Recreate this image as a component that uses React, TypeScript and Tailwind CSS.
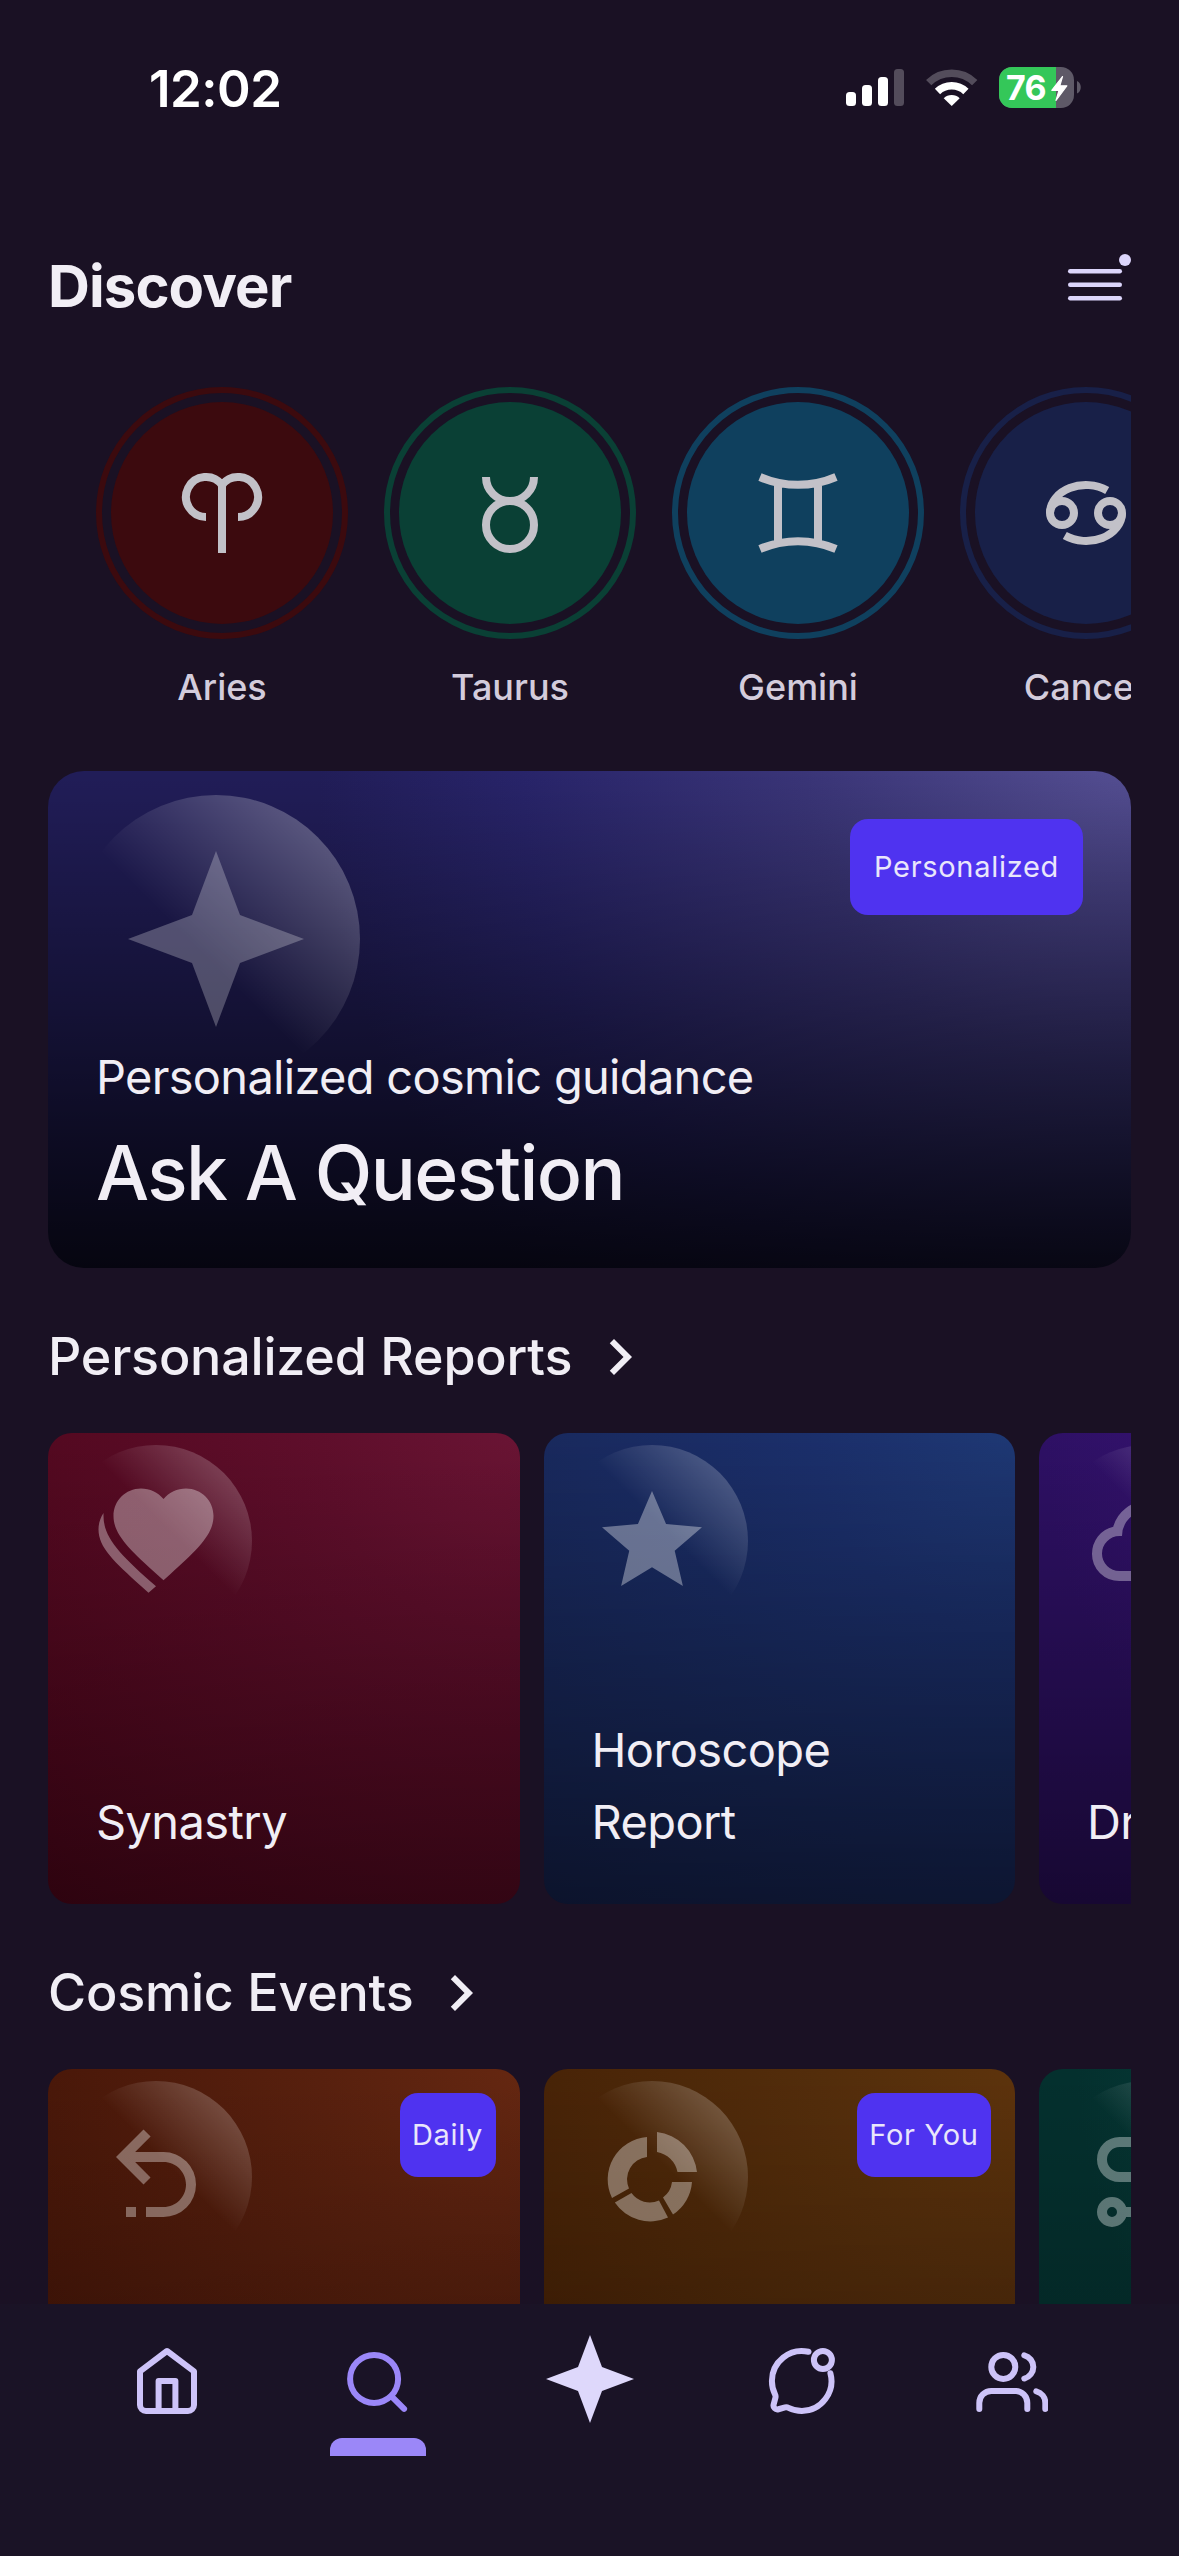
import type { ReactNode } from "react";

import { twMerge } from "tailwind-merge";

type TSign = {
  name: string;
  ring: string;
  fill: string;
  icon: ReactNode;
};

type TCard = {
  title: string;
  bg: string;
  badge?: string;
  icon: ReactNode;
};

const signs: TSign[] = [
  {
    name: "Aries",
    ring: "border-[#3c0a0e]",
    fill: "bg-[#3c0a0e]",
    icon: <path d="M12 22V5M12 5a5 5 0 1 0-4 8M16 13a5 5 0 1 0-4-8" />,
  },
  {
    name: "Taurus",
    ring: "border-[#0a4035]",
    fill: "bg-[#0a4035]",
    icon: (
      <>
        <circle cx="12" cy="15" r="6" />
        <path d="M6 3a6 6 0 0 0 12 0" />
      </>
    ),
  },
  {
    name: "Gemini",
    ring: "border-[#0f405e]",
    fill: "bg-[#0f405e]",
    icon: <path d="M2.5 3a24 24 0 0 0 19 0M2.5 21a24 24 0 0 1 19 0M7 4.5v15M17 4.5v15" />,
  },
  {
    name: "Cancer",
    ring: "border-[#182048]",
    fill: "bg-[#182048]",
    icon: (
      <>
        <circle cx="6" cy="12" r="3" />
        <circle cx="18" cy="12" r="3" />
        <path d="M3 12a9 7 0 0 1 14.3-5.65M21 12a9 7 0 0 1-14.3 5.65" />
      </>
    ),
  },
];

const reports: TCard[] = [
  {
    title: "Synastry",
    bg: "bg-[linear-gradient(to_top,rgba(0,0,0,0.4),transparent),radial-gradient(circle_at_100%_0%,#6a1434,#5f0e2b_30%,#4c0519_100%)]",
    icon: (
      <>
        <path d="M13.5 19.85l-1.45-1.32C6.9 13.86 3.5 10.78 3.5 7 3.5 3.92 5.92 1.5 9 1.5c1.74 0 3.41.81 4.5 2.09C14.59 2.31 16.26 1.5 18 1.5c3.08 0 5.5 2.42 5.5 5.5 0 3.78-3.4 6.86-8.55 11.54z" />
        <path d="M12 21.05l-1.5 1.3-1.45-1.32C3.6 16.1.5 13.3.5 9.7c0-1.25.36-2.35 1-3.3V7c0 4.3 3.3 7.8 10.5 14.05z" />
      </>
    ),
  },
  {
    title: "Horoscope Report",
    bg: "bg-[linear-gradient(to_top,rgba(0,0,0,0.48),transparent),radial-gradient(circle_at_100%_0%,#1e3874,#1b2f6b_30%,#172554_100%)]",
    icon: (
      <path d="M12 17.27L18.18 21l-1.64-7.03L22 9.24l-7.19-.62L12 2 9.19 8.62 2 9.24l5.45 4.73L5.82 21z" />
    ),
  },
  {
    title: "Dreams",
    bg: "bg-[linear-gradient(to_top,rgba(0,0,0,0.5),transparent),radial-gradient(circle_at_100%_0%,#4c1d95,#3b1478_20%,#2e1065_70%)]",
    icon: (
      <path d="M6.5 20Q4.22 20 2.61 18.43 1 16.85 1 14.58 1 12.63 2.17 11.1 3.35 9.57 5.25 9.15 5.88 6.85 7.75 5.43 9.63 4 12 4 14.93 4 16.96 6.04 19 8.07 19 11 20.73 11.2 21.86 12.5 23 13.78 23 15.5 23 17.38 21.69 18.69 20.38 20 18.5 20M6.5 18H18.5Q19.55 18 20.27 17.27 21 16.55 21 15.5 21 14.45 20.27 13.73 19.55 13 18.5 13H17V11Q17 8.93 15.54 7.46 14.08 6 12 6 9.93 6 8.46 7.46 7 8.93 7 11H6.5Q5.05 11 4.03 12.03 3 13.05 3 14.5 3 15.95 4.03 17 5.05 18 6.5 18Z" />
    ),
  },
];

const events: TCard[] = [
  {
    title: "",
    badge: "Daily",
    bg: "bg-[linear-gradient(to_top,rgba(0,0,0,0.3),transparent),radial-gradient(circle_at_100%_0%,#652711,#58200e_30%,#431407_90%)]",
    icon: (
      <path d="M13.5 7A6.5 6.5 0 0 1 20 13.5 6.5 6.5 0 0 1 13.5 20H10V18H13.5C16 18 18 16 18 13.5S16 9 13.5 9H7.83L10.91 12.09 9.5 13.5 4 8 9.5 2.5 10.92 3.91 7.83 7H13.5M6 18H8V20H6V18Z" />
    ),
  },
  {
    title: "",
    badge: "For You",
    bg: "bg-[linear-gradient(to_top,rgba(0,0,0,0.28),transparent),radial-gradient(circle_at_100%_0%,#5d330c,#532d0b_30%,#431f05_90%)]",
    icon: (
      <>
        <path d="M13 3a9.05 9.05 0 0 1 8 8h-3.9A5.1 5.1 0 0 0 13 7z" />
        <path d="M11 4v4a4.5 4.5 0 0 0-3.6 6.3L4 16.2A8.5 8.5 0 0 1 11 4z" />
        <path d="M7.9 15.2a4.5 4.5 0 0 0 5.5 1.5l1.8 3.4a8.5 8.5 0 0 1-10.63-3z" />
        <path d="M16 13h4a8.5 8.5 0 0 1-3.8 6.5l-2-3.4A4.5 4.5 0 0 0 16 13z" />
      </>
    ),
  },
  {
    title: "",
    bg: "bg-[linear-gradient(to_top,rgba(0,0,0,0.3),transparent),radial-gradient(circle_at_100%_0%,#115e59,#084540_20%,#04302e_65%)]",
    icon: (
      <path
        fill="none"
        stroke="currentColor"
        strokeWidth="2"
        d="M18 5H6.5A3.5 3.5 0 0 0 3 8.5A3.5 3.5 0 0 0 6.5 12H18M7 19a2 2 0 1 0-4 0 2 2 0 0 0 4 0h11"
      />
    ),
  },
];

const StarFour = ({ className }: { className: string }) => (
  <svg viewBox="0 0 24 24" fill="currentColor" className={className}>
    <path d="M12 1L9 9 1 12l8 3 3 8 3-8 8-3-8-3z" />
  </svg>
);

const StatusBar = () => (
  <div className="h-[177px] shrink-0 flex items-start justify-between pl-[149px] pr-[96px] pt-[58px] text-white">
    <span className="text-[51px] leading-[62px] font-semibold tracking-[-0.5px]">12:02</span>
    <svg width="238" height="60" viewBox="0 0 238 60" fill="white">
      {/* signal */}
      <rect x="1" y="34" width="10" height="14" rx="3.5" />
      <rect x="17" y="27" width="10" height="21" rx="3.5" />
      <rect x="33" y="19" width="10" height="29" rx="3.5" />
      <rect x="49" y="11" width="10" height="37" rx="3.5" opacity="0.25" />
      {/* wifi */}
      <g fill="none" stroke="white" strokeWidth="7.6">
        <path d="M83.7 24.6a33 33 0 0 1 46 0" opacity="0.25" />
        <path d="M92.5 33.4a20.5 20.5 0 0 1 28.4 0" />
      </g>
      <path d="M106.7 48l-8-7.800a11.600 11.600 0 0 1 16 0z" />
      {/* battery */}
      <clipPath id="battery">
        <rect x="154" y="9" width="75" height="41" rx="13" />
      </clipPath>
      <g clipPath="url(#battery)">
        <rect x="154" y="9" width="75" height="41" fill="#5e5967" />
        <rect x="154" y="9" width="57" height="41" fill="#34c759" />
      </g>
      <path d="M232 23c5 2 5 10.500 0 12.500z" fill="#5e5967" />
      <text x="161" y="42" fontSize="34" fontWeight="700" letterSpacing="-0.7">
        76
      </text>
      <path
        d="M217.500 18.500L206.800 32.300H214L211 42.500 221.800 27.800H214.800z"
        stroke="white"
        strokeWidth="1.2"
        strokeLinejoin="round"
      />
    </svg>
  </div>
);

const Moon = ({ className, children }: { className: string; children: ReactNode }) => (
  <div
    className={twMerge("absolute rounded-full flex items-center justify-center", className)}
  >
    {children}
  </div>
);

const Badge = ({ className, children }: { className: string; children: ReactNode }) => (
  <span
    className={twMerge(
      "absolute flex items-center justify-center bg-[#4f33f0] text-[#e9e6fb] text-[29px] tracking-[0.7px] rounded-[18px] whitespace-nowrap",
      className
    )}
  >
    {children}
  </span>
);

const SectionTitle = ({ children }: { children: string }) => (
  <div className="mt-[53px] mb-10 h-[72px] flex items-center gap-3">
    <h2 className="text-[52px] font-medium tracking-[-0.2px] whitespace-nowrap">{children}</h2>
    <svg width="72" height="72" viewBox="0 0 24 24" fill="currentColor">
      <path d="M8.59 16.58L13.17 12 8.59 7.41 10 6l6 6-6 6z" />
    </svg>
  </div>
);

const CardRow = ({ cards }: { cards: TCard[] }) => (
  <div className="flex gap-6 overflow-hidden shrink-0">
    {cards.map((card, i) => (
      <div
        key={i}
        className={twMerge(
          "relative w-[471.5px] h-[471px] shrink-0 rounded-3xl px-12 pb-[46px] flex items-end",
          card.bg
        )}
      >
        <Moon className="left-3 top-3 size-[192px] bg-[linear-gradient(to_top_right,transparent_56%,rgba(255,255,255,0.3))]">
          <svg width="120" height="120" viewBox="0 0 24 24" fill="currentColor" className="text-white/35">
            {card.icon}
          </svg>
        </Moon>
        {card.badge && (
          <Badge
            className={twMerge(
              "right-6 top-6 h-[84px]",
              card.badge === "Daily" ? "w-24" : "w-[134px]"
            )}
          >
            {card.badge}
          </Badge>
        )}
        <p className="text-[47px] leading-[72px] tracking-[-0.6px] w-[300px]">{card.title}</p>
      </div>
    ))}
  </div>
);

const NavIcon = ({ children }: { children: ReactNode }) => (
  <svg
    width="72"
    height="72"
    viewBox="0 0 24 24"
    fill="none"
    stroke="currentColor"
    strokeWidth="2"
    strokeLinecap="round"
    strokeLinejoin="round"
  >
    {children}
  </svg>
);

const NavItem = ({ active, children }: { active?: boolean; children: ReactNode }) => (
  <button
    className={twMerge(
      "flex-1 flex flex-col items-center text-[#cdc3f8]",
      active && "text-[#9b87f8]"
    )}
  >
    <span className="h-[134px] pt-5 flex items-center">{children}</span>
    {active && <span className="w-24 h-[18px] rounded-t-xl bg-[#9b87f8]" />}
  </button>
);

const BottomNav = () => (
  <nav className="h-[252px] shrink-0 flex items-start px-[61px] bg-[#1a1326]">
    <NavItem>
      <NavIcon>
        <path d="M3 8.8L12 2l9 6.8V20a2 2 0 0 1-2 2H5a2 2 0 0 1-2-2z" />
        <path d="M9.2 22V12h5.6v10" />
      </NavIcon>
    </NavItem>
    <NavItem active>
      <NavIcon>
        <circle cx="10.7" cy="11.3" r="8" />
        <path d="M16.6 17.2l4.1 4.1" />
      </NavIcon>
    </NavItem>
    <NavItem>
      <StarFour className="size-24 -mt-1 text-[#ded8fb]" />
    </NavItem>
    <NavItem>
      <NavIcon>
        <circle cx="19.3" cy="5" r="3" />
        <path d="M14.5 2.24A10 10 0 0 0 2.3 12c0 1.6.376 3.112 1.043 4.453.178.356.237.763.134 1.148l-.595 2.226a1.3 1.3 0 0 0 1.591 1.592l2.226-.596a1.63 1.63 0 0 1 1.149.133A9.96 9.96 0 0 0 12.3 22a10 10 0 0 0 9.5-12.6" />
      </NavIcon>
    </NavItem>
    <NavItem>
      <NavIcon>
        <g transform="translate(0.1 0.3)">
          <path d="M17 21v-2a4 4 0 0 0-4-4H5a4 4 0 0 0-4 4v2" />
          <circle cx="9" cy="7" r="4" />
          <path d="M23 21v-2a4 4 0 0 0-3-3.87M16 3.13a4 4 0 0 1 0 7.75" />
        </g>
      </NavIcon>
    </NavItem>
  </nav>
);

const App = () => {
  return (
    <div className="w-[1179px] h-[2556px] flex flex-col overflow-hidden bg-[#1a1124] text-[#f1eef5] font-['Inter',sans-serif]">
      <StatusBar />
      <main className="flex-1 min-h-0 overflow-hidden px-12">
        {/* header */}
        <header className="h-[210px] pt-2 flex items-center justify-between">
          <h1 className="text-[58px] font-bold tracking-[-0.9px]">Discover</h1>
          <svg width="66" height="66" viewBox="0 0 66 66" fill="#dcd5fb">
            <rect x="3" y="16" width="54" height="4.5" rx="2.2" />
            <rect x="3" y="29.5" width="54" height="4.5" rx="2.2" />
            <rect x="3" y="43" width="54" height="4.5" rx="2.2" />
            <circle cx="60" cy="7" r="6" />
          </svg>
        </header>

        {/* zodiac signs */}
        <ul className="flex gap-9 pl-12 overflow-hidden">
          {signs.map((sign) => (
            <li key={sign.name} className="w-[252px] shrink-0 flex flex-col items-center">
              <div className={twMerge("size-[252px] rounded-full border-6 p-[9px]", sign.ring)}>
                <div
                  className={twMerge(
                    "size-full rounded-full flex items-center justify-center",
                    sign.fill
                  )}
                >
                  <svg
                    width="96"
                    height="96"
                    viewBox="0 0 24 24"
                    fill="none"
                    stroke="currentColor"
                    strokeWidth="2"
                    className="text-[#c2c1c8]"
                  >
                    {sign.icon}
                  </svg>
                </div>
              </div>
              <span className="mt-[21px] text-[36px] leading-[54px] font-medium text-[#d3ccdc]">
                {sign.name}
              </span>
            </li>
          ))}
        </ul>

        {/* ask a question */}
        <section className="relative mt-[57px] h-[497px] rounded-[36px] px-12 pb-[47px] flex flex-col justify-end gap-3 bg-[linear-gradient(to_top,rgba(0,0,0,0.82),transparent),radial-gradient(ellipse_75%_150%_at_100%_0%,#544e92,#3a3578_40%,#28246a_75%,#211d58)]">
          <Moon className="left-6 top-6 size-[288px] bg-[linear-gradient(to_top_right,transparent_45%,rgba(255,255,255,0.35))]">
            <StarFour className="size-[192px] text-white/25" />
          </Moon>
          <Badge className="right-12 top-12 h-24 w-[233px]">Personalized</Badge>
          <p className="relative text-[47px] leading-[72px] tracking-[-0.7px]">
            Personalized cosmic guidance
          </p>
          <h2 className="relative text-[75px] leading-[96px] font-medium tracking-[-1.6px]">
            Ask A Question
          </h2>
        </section>

        <SectionTitle>Personalized Reports</SectionTitle>
        <CardRow cards={reports} />

        <SectionTitle>Cosmic Events</SectionTitle>
        <CardRow cards={events} />
      </main>
      <BottomNav />
    </div>
  );
};
export default App;
